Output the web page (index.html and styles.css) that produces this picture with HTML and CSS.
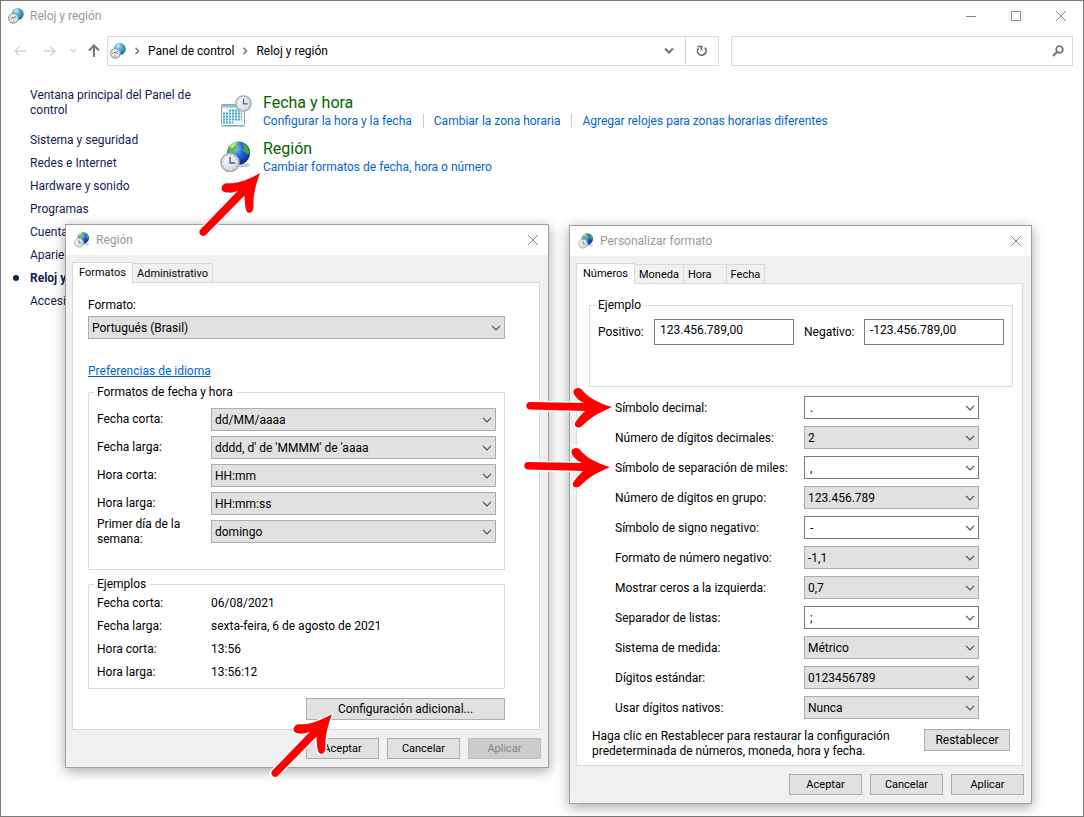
FILE: index.html
```html
<!DOCTYPE html>
<html lang="es">
<head>
    <meta charset="UTF-8">
    <meta name="viewport" content="width=device-width, initial-scale=1.0">
    <title>Reloj y región</title>
    <link rel="stylesheet" href="styles.css">
</head>
<body>
    <!-- Shared icons -->
    <svg class="sprites" aria-hidden="true">
        <defs>
            <radialGradient id="sea" cx="0.35" cy="0.3" r="0.8">
                <stop offset="0" stop-color="#8fd0f8"/>
                <stop offset="0.45" stop-color="#2468d8"/>
                <stop offset="1" stop-color="#0b1f86"/>
            </radialGradient>
            <radialGradient id="teal" cx="0.4" cy="0.3" r="0.8">
                <stop offset="0" stop-color="#a8dcee"/>
                <stop offset="0.5" stop-color="#3d9cc4"/>
                <stop offset="1" stop-color="#0f5688"/>
            </radialGradient>
            <linearGradient id="face" x1="0" y1="0" x2="1" y2="1">
                <stop offset="0" stop-color="#ffffff"/>
                <stop offset="1" stop-color="#cfd6da"/>
            </linearGradient>
        </defs>
        <symbol id="clock" viewBox="0 0 20 20">
            <circle cx="10" cy="10" r="9" fill="url(#face)" stroke="#a3adb3" stroke-width="1.6"/>
            <circle cx="10" cy="10" r="7" fill="none" stroke="#8d979d" stroke-width="1.2" stroke-dasharray="0.7 2.965"/>
            <path d="M10 4.5V10.5H15" fill="none" stroke="#4e626e" stroke-width="1.4"/>
        </symbol>
        <symbol id="region" viewBox="0 0 32 32">
            <ellipse cx="22" cy="24" rx="8" ry="2.5" fill="#c9cdd2"/>
            <circle cx="18.5" cy="12" r="11.5" fill="url(#sea)"/>
            <path d="M8 9C9 4 13 1 18 .8L19 3L16 5L17 8L14 9L13 13L9 14Z" fill="#5fb946"/>
            <path d="M22 2L27 5L29.5 11L28 14L25 11L23 10L24 6Z" fill="#49a53c"/>
            <path d="M10 3.5Q13 1 17 1.2L15 5L11 8Z" fill="#b4e68c"/>
            <use href="#clock" x="0" y="11.5" width="20" height="20"/>
        </symbol>
        <symbol id="clock-globe" viewBox="0 0 16 16">
            <circle cx="9.8" cy="6" r="5.9" fill="url(#teal)"/>
            <path d="M7 2L10 .6L9 3L6 5Z" fill="#d3f0f6"/>
            <circle cx="5.4" cy="10.3" r="4.8" fill="#e8ebed" stroke="#8e979c" stroke-width="1.1"/>
            <path d="M2.5 10.3H3.5M5.4 13.5V12.5M8.3 10.3H7.5M5.4 10.3L7.5 8.2M5.4 10.3L3.8 8.8" stroke="#4c565c" stroke-width="1" fill="none"/>
        </symbol>
        <symbol id="calendar" viewBox="0 0 32 32">
            <rect x="1.5" y="9.5" width="23" height="21" rx="1" fill="#f4f7f8" stroke="#98a4aa"/>
            <rect x="2" y="10" width="22" height="2.5" fill="#7ec8e4"/>
            <path d="M9 15.5H22M3 18.5H22M3 21.5H22M3 24.5H22M3 27.5H13" stroke="#35a7d3" stroke-width="2" stroke-dasharray="2 1" fill="none"/>
            <path d="M2 31.5H26" stroke="#c4c9cc"/>
            <use href="#clock" x="15" y="0" width="17" height="17"/>
        </symbol>
        <symbol id="close" viewBox="0 0 12 12">
            <path d="M1 1L11 11M11 1L1 11" stroke="#8a8a8a" fill="none"/>
        </symbol>
        <symbol id="crumb" viewBox="0 0 6 8">
            <path d="M1.5 .8L4.5 4L1.5 7.2" stroke="#757575" stroke-width="1.5" fill="none"/>
        </symbol>
        <symbol id="chevron" viewBox="0 0 10 8">
            <path d="M1 1.5L5 5.5L9 1.5" stroke="currentColor" stroke-width="2" fill="none"/>
        </symbol>
        <symbol id="arrow" viewBox="-90 -24 94 48" overflow="visible">
            <path class="arrow-shape" d="M0 0C-14 -4 -24 -10 -29 -16C-31 -19 -34 -20 -37 -18C-40 -16 -38 -12 -36 -10C-34 -7 -31 -5.5 -28 -4L-82 -5C-87 -5 -87 2.5 -82 2.5L-27 4C-31 8 -35 12 -37 16C-38 20 -34 22 -30 19C-22 11 -14 6 0 0Z"/>
        </symbol>
    </svg>

    <div class="window">
        <header class="titlebar">
            <svg class="icon-16"><use href="#clock-globe"/></svg>
            <h1 class="titlebar-text">Reloj y región</h1>
            <div class="window-buttons">
                <button type="button" class="window-button" aria-label="Minimizar">
                    <svg width="12" height="12" viewBox="0 0 12 12"><path d="M1 6.5H11" stroke="#8a8a8a"/></svg>
                </button>
                <button type="button" class="window-button" aria-label="Maximizar">
                    <svg width="12" height="12" viewBox="0 0 12 12"><rect x="1.5" y="1.5" width="9" height="9" fill="none" stroke="#8a8a8a"/></svg>
                </button>
                <button type="button" class="window-button" aria-label="Cerrar">
                    <svg width="12" height="12"><use href="#close"/></svg>
                </button>
            </div>
        </header>

        <nav class="toolbar">
            <div class="history">
                <button type="button" class="history-button" aria-label="Atrás" disabled>
                    <svg width="12" height="12" viewBox="0 0 12 12"><path d="M12 6H1M5.5 1.5L1 6L5.5 10.5" stroke="#d4d4d4" stroke-width="1.5" fill="none"/></svg>
                </button>
                <button type="button" class="history-button" aria-label="Adelante" disabled>
                    <svg width="12" height="12" viewBox="0 0 12 12"><path d="M0 6H11M6.5 1.5L11 6L6.5 10.5" stroke="#d4d4d4" stroke-width="1.5" fill="none"/></svg>
                </button>
                <button type="button" class="history-button history-menu" aria-label="Recientes" disabled>
                    <svg width="7" height="6"><use href="#chevron"/></svg>
                </button>
                <button type="button" class="history-button" aria-label="Subir">
                    <svg width="12" height="14" viewBox="0 0 12 14"><path d="M6 13V2M1 6.5L6 1.5L11 6.5" stroke="#747474" stroke-width="2" fill="none"/></svg>
                </button>
            </div>
            <div class="address">
                <div class="address-path">
                    <svg class="icon-16"><use href="#clock-globe"/></svg>
                    <svg class="crumb"><use href="#crumb"/></svg>
                    <a href="#" class="address-link">Panel de control</a>
                    <svg class="crumb"><use href="#crumb"/></svg>
                    <a href="#" class="address-link">Reloj y región</a>
                </div>
                <button type="button" class="address-button" aria-label="Ubicaciones anteriores">
                    <svg width="10" height="8"><use href="#chevron"/></svg>
                </button>
                <button type="button" class="address-button address-refresh" aria-label="Actualizar">
                    <svg width="12" height="12" viewBox="0 0 12 12"><path d="M2.5 3A4.3 4.3 0 1 0 8.7 2.6M1.5 1.5H5.5V5.5" stroke="#6e6e6e" stroke-width="1.7" fill="none"/></svg>
                </button>
            </div>
            <div class="search">
                <input type="search" class="search-input" aria-label="Buscar">
                <svg class="search-icon" width="12" height="12" viewBox="0 0 12 12"><circle cx="7.5" cy="4.5" r="3.3" stroke="#747474" stroke-width="1.8" fill="none"/><path d="M5 7L1 11" stroke="#747474" stroke-width="2"/></svg>
            </div>
        </nav>

        <div class="content">
            <aside class="sidebar">
                <a href="#" class="sidebar-home">Ventana principal del Panel de control</a>
                <ul class="sidebar-list">
                    <li><a href="#">Sistema y seguridad</a></li>
                    <li><a href="#">Redes e Internet</a></li>
                    <li><a href="#">Hardware y sonido</a></li>
                    <li><a href="#">Programas</a></li>
                    <li><a href="#">Cuentas</a></li>
                    <li><a href="#">Apariencia</a></li>
                    <li class="current"><a href="#">Reloj y región</a></li>
                    <li><a href="#">Accesibilidad</a></li>
                </ul>
            </aside>
            <main class="categories">
                <section class="category">
                    <svg class="icon-32"><use href="#calendar"/></svg>
                    <div>
                        <h2 class="category-title"><a href="#">Fecha y hora</a></h2>
                        <ul class="tasks">
                            <li><a href="#">Configurar la hora y la fecha</a></li>
                            <li><a href="#">Cambiar la zona horaria</a></li>
                            <li><a href="#">Agregar relojes para zonas horarias diferentes</a></li>
                        </ul>
                    </div>
                </section>
                <section class="category">
                    <svg class="icon-32"><use href="#region"/></svg>
                    <div>
                        <h2 class="category-title"><a href="#">Región</a></h2>
                        <ul class="tasks">
                            <li><a href="#">Cambiar formatos de fecha, hora o número</a></li>
                        </ul>
                    </div>
                </section>
            </main>
        </div>
    </div>

    <!-- Región -->
    <div class="dialog dialog-region" role="dialog" aria-labelledby="regionTitle">
        <header class="titlebar dialog-titlebar">
            <svg class="icon-16"><use href="#region"/></svg>
            <h2 class="titlebar-text" id="regionTitle">Región</h2>
            <button type="button" class="dialog-close" aria-label="Cerrar">
                <svg width="12" height="12"><use href="#close"/></svg>
            </button>
        </header>
        <form class="dialog-body">
            <div class="tabs" role="tablist">
                <button type="button" class="tab active" role="tab" aria-selected="true">Formatos</button>
                <button type="button" class="tab" role="tab" aria-selected="false">Administrativo</button>
            </div>
            <div class="panel region-panel" role="tabpanel">
                <label for="format">Formato:</label>
                <select id="format" class="combo format-combo"><option>Portugués (Brasil)</option></select>
                <a href="#" class="language-link">Preferencias de idioma</a>

                <fieldset class="group date-group">
                    <legend>Formatos de fecha y hora</legend>
                    <label for="shortDate">Fecha corta:</label>
                    <select id="shortDate" class="combo"><option>dd/MM/aaaa</option></select>
                    <label for="longDate">Fecha larga:</label>
                    <select id="longDate" class="combo"><option>dddd, d' de 'MMMM' de 'aaaa</option></select>
                    <label for="shortTime">Hora corta:</label>
                    <select id="shortTime" class="combo"><option>HH:mm</option></select>
                    <label for="longTime">Hora larga:</label>
                    <select id="longTime" class="combo"><option>HH:mm:ss</option></select>
                    <label for="firstDay">Primer día de la semana:</label>
                    <select id="firstDay" class="combo"><option>domingo</option></select>
                </fieldset>

                <fieldset class="group examples-group">
                    <legend>Ejemplos</legend>
                    <dl class="examples">
                        <dt>Fecha corta:</dt><dd>06/08/2021</dd>
                        <dt>Fecha larga:</dt><dd>sexta-feira, 6 de agosto de 2021</dd>
                        <dt>Hora corta:</dt><dd>13:56</dd>
                        <dt>Hora larga:</dt><dd>13:56:12</dd>
                    </dl>
                </fieldset>

                <button type="button" class="button button-wide">Configuración adicional...</button>
            </div>
            <div class="dialog-actions">
                <button type="button" class="button">Aceptar</button>
                <button type="button" class="button">Cancelar</button>
                <button type="button" class="button" disabled>Aplicar</button>
            </div>
        </form>
    </div>

    <!-- Personalizar formato -->
    <div class="dialog dialog-custom" role="dialog" aria-labelledby="customTitle">
        <header class="titlebar dialog-titlebar">
            <svg class="icon-16"><use href="#region"/></svg>
            <h2 class="titlebar-text" id="customTitle">Personalizar formato</h2>
            <button type="button" class="dialog-close" aria-label="Cerrar">
                <svg width="12" height="12"><use href="#close"/></svg>
            </button>
        </header>
        <form class="dialog-body">
            <div class="tabs" role="tablist">
                <button type="button" class="tab active" role="tab" aria-selected="true">Números</button>
                <button type="button" class="tab" role="tab" aria-selected="false">Moneda</button>
                <button type="button" class="tab tab-spaced" role="tab" aria-selected="false">Hora</button>
                <button type="button" class="tab" role="tab" aria-selected="false">Fecha</button>
            </div>
            <div class="panel custom-panel" role="tabpanel">
                <fieldset class="group sample-group">
                    <legend>Ejemplo</legend>
                    <div class="samples">
                        <label for="positive">Positivo:</label>
                        <input type="text" id="positive" class="sample" value="123.456.789,00" readonly>
                        <label for="negative">Negativo:</label>
                        <input type="text" id="negative" class="sample" value="-123.456.789,00" readonly>
                    </div>
                </fieldset>

                <div class="settings">
                    <label for="decimalSymbol">Símbolo decimal:</label>
                    <select id="decimalSymbol" class="combo editable"><option>.</option></select>
                    <label for="decimalDigits">Número de dígitos decimales:</label>
                    <select id="decimalDigits" class="combo"><option>2</option></select>
                    <label for="groupSymbol">Símbolo de separación de miles:</label>
                    <select id="groupSymbol" class="combo editable"><option>,</option></select>
                    <label for="groupDigits">Número de dígitos en grupo:</label>
                    <select id="groupDigits" class="combo"><option>123.456.789</option></select>
                    <label for="negativeSymbol">Símbolo de signo negativo:</label>
                    <select id="negativeSymbol" class="combo editable"><option>-</option></select>
                    <label for="negativeFormat">Formato de número negativo:</label>
                    <select id="negativeFormat" class="combo"><option>-1,1</option></select>
                    <label for="leadingZeros">Mostrar ceros a la izquierda:</label>
                    <select id="leadingZeros" class="combo"><option>0,7</option></select>
                    <label for="listSeparator">Separador de listas:</label>
                    <select id="listSeparator" class="combo editable"><option>;</option></select>
                    <label for="measureSystem">Sistema de medida:</label>
                    <select id="measureSystem" class="combo"><option>Métrico</option></select>
                    <label for="standardDigits">Dígitos estándar:</label>
                    <select id="standardDigits" class="combo"><option>0123456789</option></select>
                    <label for="nativeDigits">Usar dígitos nativos:</label>
                    <select id="nativeDigits" class="combo"><option>Nunca</option></select>
                </div>

                <div class="reset">
                    <p>Haga clic en Restablecer para restaurar la configuración predeterminada de números, moneda, hora y fecha.</p>
                    <button type="button" class="button button-reset">Restablecer</button>
                </div>
            </div>
            <div class="dialog-actions">
                <button type="button" class="button">Aceptar</button>
                <button type="button" class="button">Cancelar</button>
                <button type="button" class="button">Aplicar</button>
            </div>
        </form>
    </div>

    <!-- Arrows pointing at each step -->
    <svg class="arrows" aria-hidden="true">
        <g transform="translate(260 173) rotate(-47)"><use href="#arrow" x="-90" y="-24" width="94" height="48"/></g>
        <g transform="translate(332 714) rotate(-47)"><use href="#arrow" x="-90" y="-24" width="94" height="48"/></g>
        <g transform="translate(612 407)"><use href="#arrow" x="-90" y="-24" width="94" height="48"/></g>
        <g transform="translate(610 467)"><use href="#arrow" x="-90" y="-24" width="94" height="48"/></g>
    </svg>
</body>
</html>
```
FILE: styles.css
```css
* {
    box-sizing: border-box;
}

body {
    margin: 0;
    position: relative;
    font-family: Roboto, "Open Sans", sans-serif;
    font-size: 12px;
    line-height: 16px;
    color: #000;
    background-color: #fff;
}

button, input, select {
    font: inherit;
    color: inherit;
    margin: 0;
}

button {
    padding: 0;
    border: none;
    background: none;
}

a {
    color: #0066cc;
    text-decoration: none;
}

h1, h2, p, ul, dl, dd {
    margin: 0;
    padding: 0;
    font-weight: normal;
}

ul {
    list-style: none;
}

svg {
    display: block;
    flex-shrink: 0;
}

.sprites {
    position: absolute;
    width: 0;
    height: 0;
}

.icon-16 {
    width: 16px;
    height: 16px;
}

.icon-32 {
    width: 32px;
    height: 32px;
}

/* Main window */
.window {
    min-height: 100vh;
    border: 1px solid #7a7a7a;
}

.titlebar {
    display: flex;
    align-items: center;
    height: 30px;
    padding-left: 7px;
    gap: 6px;
    background-color: #fff;
}

.titlebar-text {
    flex: 1;
    font-size: 12px;
    color: #999;
}

.window-buttons {
    display: flex;
}

.window-button {
    display: flex;
    align-items: center;
    justify-content: center;
    width: 45px;
    height: 30px;
}

.toolbar {
    display: flex;
    height: 30px;
    margin: 5px 10px 0 0;
}

.history {
    display: flex;
    align-items: center;
    width: 106px;
    padding-left: 13px;
    gap: 18px;
}

.history-button {
    color: #d4d4d4;
}

.history-menu {
    margin: 0 -7px 0 -4px;
}

.address {
    display: flex;
    flex: 610;
    border: 1px solid #d9d9d9;
}

.address-path {
    display: flex;
    flex: 1;
    align-items: center;
    padding-left: 2px;
    gap: 8px;
}

.address-link {
    color: #000;
}

.crumb {
    width: 6px;
    height: 8px;
}

.address-button {
    display: flex;
    align-items: center;
    justify-content: center;
    width: 32px;
    color: #747474;
}

.address-refresh {
    width: 33px;
    border-left: 1px solid #d9d9d9;
}

.search {
    display: flex;
    flex: 340;
    align-items: center;
    margin-left: 12px;
    border: 1px solid #d9d9d9;
}

.search-input {
    flex: 1;
    min-width: 0;
    height: 28px;
    padding: 0 8px;
    border: none;
    outline: none;
}

.search-icon {
    margin-right: 8px;
}

.content {
    display: flex;
    padding: 22px 20px 20px 29px;
}

.sidebar {
    width: 190px;
    line-height: 15px;
}

.sidebar a {
    color: #151c55;
}

.sidebar-home {
    display: block;
    width: 170px;
}

.sidebar-list {
    margin-top: 11px;
    line-height: 23px;
}

.sidebar .current {
    position: relative;
    font-weight: bold;
}

.current::before {
    content: "";
    position: absolute;
    left: -17px;
    top: 8px;
    width: 6px;
    height: 6px;
    border-radius: 50%;
    background-color: #151c55;
}

.categories {
    flex: 1;
    padding-top: 7px;
}

.category {
    display: flex;
    gap: 11px;
    height: 46px;
}

.category-title {
    font-size: 16px;
    line-height: 20px;
    margin-top: -2px;
}

.category-title a {
    color: #006600;
}

.tasks {
    display: flex;
    margin-top: 1px;
    line-height: 14px;
}

.tasks li + li {
    margin-left: 11px;
    padding-left: 10px;
    border-left: 1px solid #ccc;
}

/* Dialogs */
.dialog {
    position: absolute;
    border: 1px solid #a0a0a0;
    background-color: #f0f0f0;
    box-shadow: 0 3px 12px rgba(0, 0, 0, 0.35);
}

.dialog-region {
    left: 65px;
    top: 224px;
    width: 484px;
}

.dialog-custom {
    left: 569px;
    top: 225px;
    width: 463px;
}

.dialog-titlebar {
    padding-left: 8px;
}

.dialog-close {
    padding: 9px;
}

.dialog-body {
    padding: 7px 7px 8px 6px;
}

.tabs {
    display: flex;
    align-items: flex-end;
    font-size: 11px;
}

.tab {
    height: 19px;
    padding: 0 4px;
    border: 1px solid #d9d9d9;
    border-bottom: none;
    border-left: none;
    line-height: 20px;
}

.tab.active {
    position: relative;
    height: 21px;
    margin-bottom: -1px;
    padding: 0 6px;
    border-left: 1px solid #d9d9d9;
    background-color: #fff;
    line-height: 18px;
}

.tab.tab-spaced {
    padding-right: 14px;
}

.panel {
    border: 1px solid #d9d9d9;
    background-color: #fff;
}

.region-panel {
    display: flex;
    flex-direction: column;
    margin-right: 1px;
    padding: 14px 34px 9px 15px;
}

.combo {
    appearance: none;
    width: 100%;
    height: 23px;
    padding: 0 24px 0 3px;
    border: 1px solid #adadad;
    border-radius: 0;
    background: #e1e1e1 url("data:image/svg+xml,%3Csvg xmlns='http://www.w3.org/2000/svg' width='10' height='6'%3E%3Cpath d='M1 .8L5 4.8L9 .8' fill='none' stroke='%23505050' stroke-width='1.2'/%3E%3C/svg%3E") no-repeat right 3px center;
}

.combo.editable {
    padding-left: 5px;
    border-color: #7a7a7a;
    background-color: #fff;
}

.format-combo {
    margin-top: 3px;
}

.language-link {
    align-self: flex-start;
    margin: 24px 0 5px;
    text-decoration: underline;
}

.group {
    margin: 0;
    padding: 0 8px;
    border: 1px solid #dcdcdc;
}

.group legend {
    padding: 0 3px;
    margin-left: -3px;
}

.date-group {
    display: grid;
    grid-template-columns: 108px 1fr;
    align-items: center;
    gap: 5px 6px;
    margin-bottom: 6px;
    padding: 8px 8px 26px;
}

.date-group label {
    line-height: 15px;
    margin: -4px 0;
}

.examples-group {
    padding-bottom: 4px;
}

.examples {
    display: grid;
    grid-template-columns: 114px 1fr;
    line-height: 23px;
}

.button {
    flex-shrink: 0;
    width: 73px;
    height: 22px;
    border: 1px solid #adadad;
    background-color: #e1e1e1;
}

.button:disabled {
    border-color: #bfbfbf;
    background-color: #ccc;
    color: #888;
}

.button-wide {
    align-self: flex-end;
    width: 199px;
    margin-top: 9px;
}

.dialog-actions {
    display: flex;
    justify-content: flex-end;
    gap: 8px;
    margin-top: 8px;
    font-size: 11px;
}

.dialog-actions .button {
    height: 21px;
}

.custom-panel {
    margin-right: 1px;
    padding: 13px 9px 6px 12px;
}

.sample-group {
    padding: 6px 8px 41px;
}

.samples {
    display: grid;
    grid-template-columns: 56px 1fr 70px 1fr;
    align-items: center;
}

.samples label + input + label {
    padding-left: 10px;
}

.sample {
    width: 100%;
    height: 26px;
    padding: 0 5px 4px;
    border: 1px solid #7a7a7a;
}

.settings {
    display: grid;
    grid-template-columns: 189px 1fr;
    align-items: center;
    row-gap: 7px;
    margin-top: 9px;
    padding: 0 34px 0 26px;
}

.reset {
    display: flex;
    align-items: flex-start;
    justify-content: space-between;
    gap: 20px;
    margin: 10px 3px 0;
    line-height: 15px;
}

.button-reset {
    width: 86px;
}

/* Arrows over the windows */
.arrows {
    position: absolute;
    left: 0;
    top: 0;
    width: 100%;
    height: 100%;
    pointer-events: none;
}

.arrow-shape {
    fill: #f00;
    stroke: #fff;
    stroke-width: 3px;
    stroke-linejoin: round;
    paint-order: stroke;
}
```
